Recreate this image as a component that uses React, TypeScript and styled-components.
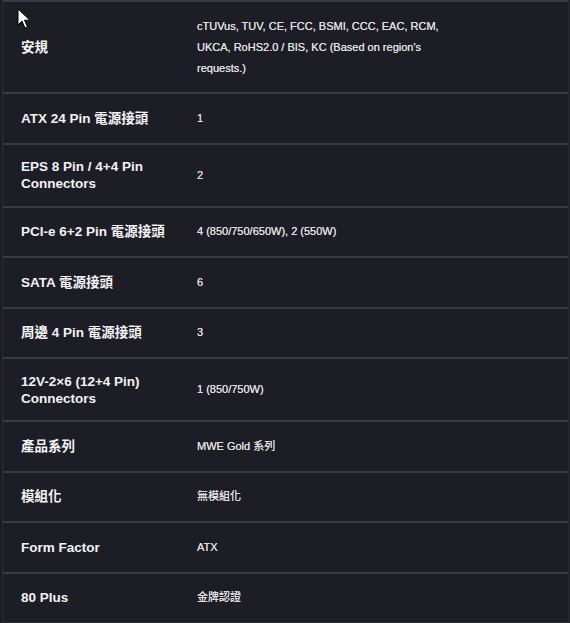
import React from "react";
import styled, { createGlobalStyle } from "styled-components";

const Global = createGlobalStyle`
  html, body {
    margin: 0;
    padding: 0;
    background: #1c1c23;
  }
  body {
    font-family: "Liberation Sans", "Noto Sans CJK TC", Arial, sans-serif;
    -webkit-font-smoothing: antialiased;
  }
`;

const Page = styled.div`
  position: relative;
  width: 570px;
  height: 623px;
  overflow: hidden;
  background: #1c1c23;
`;

const Table = styled.div`
  margin: 0 1px 0 2px;
  border-left: 1px solid #2c2c34;
  border-right: 1px solid #2c2c34;
  border-bottom: 1px solid #2c2c34;
  background: #1d1d25;
`;

const Row = styled.div<{ $tall?: boolean }>`
  display: grid;
  grid-template-columns: 194px 1fr;
  align-items: center;
  border-top: 2px solid #393941;
  min-height: ${(p) => (p.$tall ? "61px" : "48.5px")};
  box-sizing: content-box;
`;

const Label = styled.div`
  padding: 13.5px 20px 13.5px 18px;
  font-size: 13.5px;
  line-height: 17px;
  font-weight: 700;
  color: #f2f2f4;
`;

const Value = styled.div`
  padding: 13.5px 0;
  max-width: 250px;
  font-size: 11px;
  line-height: 21px;
  color: #e0e0e2;
  text-shadow: 0 0 0.4px #e0e0e2;
`;

const Cursor = styled.svg`
  position: absolute;
  left: 17px;
  top: 8px;
  pointer-events: none;
`;

const rows: { label: string; value: string; tall?: boolean }[] = [
  {
    label: "安規",
    value:
      "cTUVus, TUV, CE, FCC, BSMI, CCC, EAC, RCM, UKCA, RoHS2.0 / BIS, KC (Based on region's requests.)",
  },
  { label: "ATX 24 Pin 電源接頭", value: "1" },
  { label: "EPS 8 Pin / 4+4 Pin Connectors", value: "2", tall: true },
  { label: "PCI-e 6+2 Pin 電源接頭", value: "4 (850/750/650W), 2 (550W)" },
  { label: "SATA 電源接頭", value: "6" },
  { label: "周邊 4 Pin 電源接頭", value: "3" },
  { label: "12V-2×6 (12+4 Pin) Connectors", value: "1 (850/750W)", tall: true },
  { label: "產品系列", value: "MWE Gold 系列" },
  { label: "模組化", value: "無模組化" },
  { label: "Form Factor", value: "ATX" },
  { label: "80 Plus", value: "金牌認證" },
];

export default function App() {
  return (
    <Page>
      <Global />
      <Table>
        {rows.map((r) => (
          <Row key={r.label} $tall={r.tall}>
            <Label>{r.label}</Label>
            <Value>{r.value}</Value>
          </Row>
        ))}
      </Table>
      <Cursor width="14" height="22" viewBox="0 0 14 22">
        <path
          d="M1 1 L1 17 L5 13 L8 20 L10.5 19 L7.5 12.2 L13 12.2 Z"
          fill="#ffffff"
          stroke="#000000"
          strokeWidth="1"
          strokeLinejoin="round"
        />
      </Cursor>
    </Page>
  );
}
